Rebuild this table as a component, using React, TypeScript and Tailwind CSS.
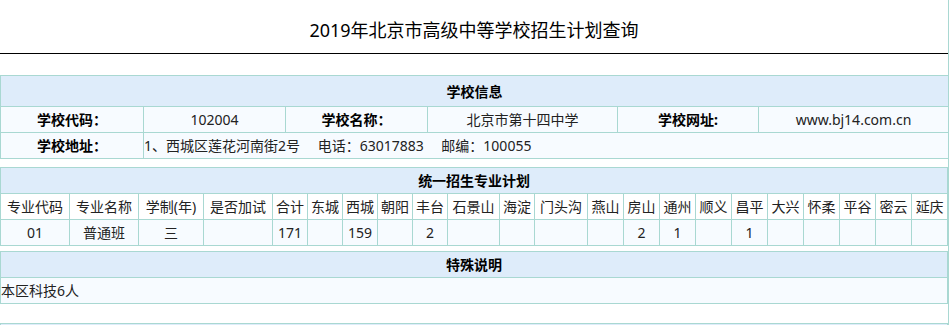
const font = { fontFamily: '"Noto Sans", "Noto Sans CJK SC", sans-serif' };

const districts = [
  { name: "合计", w: 35, v: "171" },
  { name: "东城", w: 35, v: "" },
  { name: "西城", w: 35, v: "159" },
  { name: "朝阳", w: 35, v: "" },
  { name: "丰台", w: 35, v: "2" },
  { name: "石景山", w: 52, v: "" },
  { name: "海淀", w: 35, v: "" },
  { name: "门头沟", w: 53, v: "" },
  { name: "燕山", w: 36, v: "" },
  { name: "房山", w: 36, v: "2" },
  { name: "通州", w: 36, v: "1" },
  { name: "顺义", w: 36, v: "" },
  { name: "昌平", w: 36, v: "1" },
  { name: "大兴", w: 36, v: "" },
  { name: "怀柔", w: 36, v: "" },
  { name: "平谷", w: 36, v: "" },
  { name: "密云", w: 36, v: "" },
  { name: "延庆", w: 36, v: "" },
];

const cell = "border border-[#a9d8d2] p-0 align-middle";

export default function App() {
  return (
    <div className="w-[949px] min-h-[325px] border-r border-[#a9d8d2] bg-white text-[14px] text-[#222]" style={font}>
      <div className="h-[54px] border-b border-black flex items-center justify-center pt-[6px]">
        <h1 className="text-[18px] text-black leading-none">2019年北京市高级中等学校招生计划查询</h1>
      </div>

      {/* 学校信息 */}
      <table className="mt-[21px] w-[948px] table-fixed border-collapse">
        <colgroup>
          <col className="w-[143px]" />
          <col className="w-[142px]" />
          <col className="w-[142px]" />
          <col className="w-[190px]" />
          <col className="w-[141px]" />
          <col className="w-[190px]" />
        </colgroup>
        <tbody>
          <tr className="h-[31px] bg-[#deecfa]">
            <th colSpan={6} className={`${cell} font-bold text-black`}>学校信息</th>
          </tr>
          <tr className="h-[26px] bg-[#f7fbff] text-center">
            <td className={`${cell} font-bold text-black`}>学校代码：</td>
            <td className={cell}>102004</td>
            <td className={`${cell} font-bold text-black`}>学校名称：</td>
            <td className={cell}>北京市第十四中学</td>
            <td className={`${cell} font-bold text-black`}>学校网址:</td>
            <td className={cell}>www.bj14.com.cn</td>
          </tr>
          <tr className="h-[26px] bg-[#f7fbff]">
            <td className={`${cell} text-center font-bold text-black`}>学校地址：</td>
            <td colSpan={5} className={`${cell} text-left whitespace-pre`}>
              1、西城区莲花河南街2号　 电话：63017883　 邮编：100055
            </td>
          </tr>
        </tbody>
      </table>

      {/* 统一招生专业计划 */}
      <table className="mt-[8px] w-[948px] table-fixed border-collapse">
        <colgroup>
          <col className="w-[69px]" />
          <col className="w-[69px]" />
          <col className="w-[65px]" />
          <col className="w-[69px]" />
          {districts.map((d) => (
            <col key={d.name} style={{ width: d.w }} />
          ))}
        </colgroup>
        <tbody>
          <tr className="h-[26px] bg-[#deecfa]">
            <th colSpan={22} className={`${cell} font-bold text-black`}>统一招生专业计划</th>
          </tr>
          <tr className="h-[26px] bg-white text-center whitespace-nowrap">
            <td className={cell}>专业代码</td>
            <td className={cell}>专业名称</td>
            <td className={cell}>学制(年)</td>
            <td className={cell}>是否加试</td>
            {districts.map((d) => (
              <td key={d.name} className={cell}>{d.name}</td>
            ))}
          </tr>
          <tr className="h-[26px] bg-[#f7fbff] text-center">
            <td className={cell}>01</td>
            <td className={cell}>普通班</td>
            <td className={cell}>三</td>
            <td className={cell}></td>
            {districts.map((d) => (
              <td key={d.name} className={cell}>{d.v}</td>
            ))}
          </tr>
        </tbody>
      </table>

      {/* 特殊说明 */}
      <table className="mt-[5px] w-[948px] table-fixed border-collapse">
        <tbody>
          <tr className="h-[26px] bg-[#deecfa]">
            <th className={`${cell} font-bold text-black`}>特殊说明</th>
          </tr>
          <tr className="h-[26px] bg-[#f7fbff]">
            <td className={`${cell} text-left`}>本区科技6人</td>
          </tr>
        </tbody>
      </table>

      <div className="mt-[19px] w-[948px] h-[4px] border-t border-x border-[#a9d8d2] bg-[#deecfa]" />
    </div>
  );
}
